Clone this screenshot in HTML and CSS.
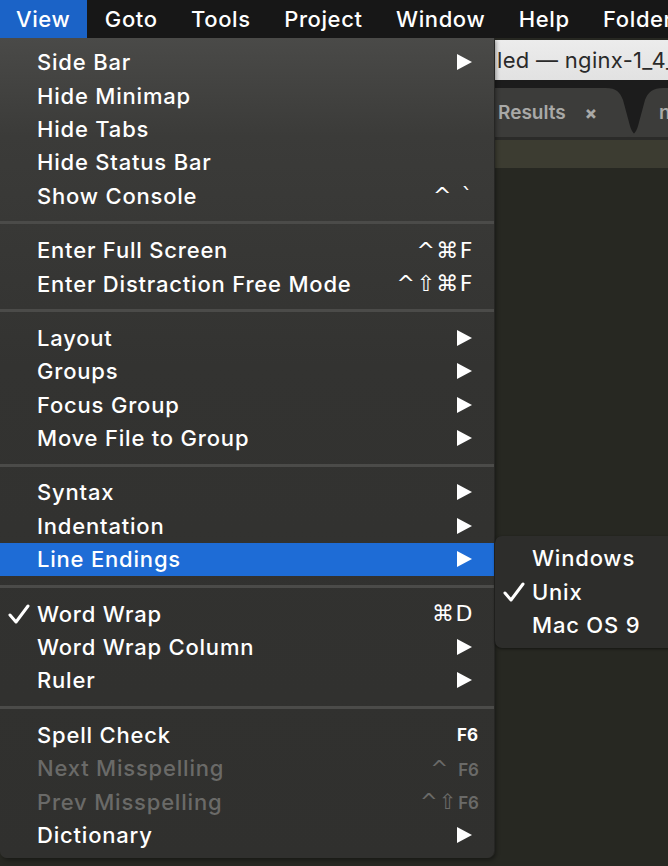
FILE: index.html
```html
<!DOCTYPE html>
<html>
<head>
<meta charset="utf-8">
<link rel="stylesheet" href="styles.css">
</head>
<body>
<div class="screen">
  <div class="menubar">
    <div class="mb-item active">View</div>
    <div class="mb-item">Goto</div>
    <div class="mb-item">Tools</div>
    <div class="mb-item">Project</div>
    <div class="mb-item">Window</div>
    <div class="mb-item">Help</div>
    <div class="mb-item">Folder</div>
  </div>
  <div class="stage">
    <div class="app">
      <div class="titlebar"><span class="title">led — nginx-1_4_5</span></div>
      <div class="tabgap"></div>
      <div class="tabbar">
        <svg class="tabshape" width="668" height="49" viewBox="0 0 668 49">
          <rect x="0" y="0" width="668" height="49" fill="#1c1c1c"/>
          <path d="M0 0 H606 C616 0 620 4 623 12 L630 38 C632 45 636 49 642 49 H0 Z" fill="#3c3c3a"/>
          <path d="M626 49 C632 49 636 45 638 38 L645 12 C648 4 653 0 663 0 H668 V49 Z" fill="#3c3c3a"/>
        </svg>
        <div class="tabs">
          <span class="tab-label">Results</span>
          <span class="tab-close">×</span>
          <span class="tab-label tab2">nginx</span>
        </div>
      </div>
      <div class="tabline"></div>
      <div class="gutterbar"></div>
      <div class="editor"></div>
    </div>

    <div class="menu">
      <div class="item"><span class="check"></span><span class="label">Side Bar</span><svg class="arrow" width="15" height="16" viewBox="0 0 15 16"><path d="M0 0 L15 8 L0 16 Z" fill="#fff"/></svg></div>
      <div class="item"><span class="check"></span><span class="label">Hide Minimap</span></div>
      <div class="item"><span class="check"></span><span class="label">Hide Tabs</span></div>
      <div class="item"><span class="check"></span><span class="label">Hide Status Bar</span></div>
      <div class="item"><span class="check"></span><span class="label">Show Console</span><span class="key">^ `</span></div>
      <div class="sep"></div>
      <div class="item"><span class="check"></span><span class="label">Enter Full Screen</span><span class="key">^⌘F</span></div>
      <div class="item"><span class="check"></span><span class="label">Enter Distraction Free Mode</span><span class="key">^⇧⌘F</span></div>
      <div class="sep"></div>
      <div class="item"><span class="check"></span><span class="label">Layout</span><svg class="arrow" width="15" height="16" viewBox="0 0 15 16"><path d="M0 0 L15 8 L0 16 Z" fill="#fff"/></svg></div>
      <div class="item"><span class="check"></span><span class="label">Groups</span><svg class="arrow" width="15" height="16" viewBox="0 0 15 16"><path d="M0 0 L15 8 L0 16 Z" fill="#fff"/></svg></div>
      <div class="item"><span class="check"></span><span class="label">Focus Group</span><svg class="arrow" width="15" height="16" viewBox="0 0 15 16"><path d="M0 0 L15 8 L0 16 Z" fill="#fff"/></svg></div>
      <div class="item"><span class="check"></span><span class="label">Move File to Group</span><svg class="arrow" width="15" height="16" viewBox="0 0 15 16"><path d="M0 0 L15 8 L0 16 Z" fill="#fff"/></svg></div>
      <div class="sep"></div>
      <div class="item"><span class="check"></span><span class="label">Syntax</span><svg class="arrow" width="15" height="16" viewBox="0 0 15 16"><path d="M0 0 L15 8 L0 16 Z" fill="#fff"/></svg></div>
      <div class="item"><span class="check"></span><span class="label">Indentation</span><svg class="arrow" width="15" height="16" viewBox="0 0 15 16"><path d="M0 0 L15 8 L0 16 Z" fill="#fff"/></svg></div>
      <div class="item selected"><span class="check"></span><span class="label">Line Endings</span><svg class="arrow" width="15" height="16" viewBox="0 0 15 16"><path d="M0 0 L15 8 L0 16 Z" fill="#fff"/></svg></div>
      <div class="sep"></div>
      <div class="item"><span class="check"><svg width="22" height="20" viewBox="0 0 22 20"><path d="M2 11 L8 18 L20 2" fill="none" stroke="#fff" stroke-width="3" stroke-linecap="round" stroke-linejoin="round"/></svg></span><span class="label">Word Wrap</span><span class="key">⌘D</span></div>
      <div class="item"><span class="check"></span><span class="label">Word Wrap Column</span><svg class="arrow" width="15" height="16" viewBox="0 0 15 16"><path d="M0 0 L15 8 L0 16 Z" fill="#fff"/></svg></div>
      <div class="item"><span class="check"></span><span class="label">Ruler</span><svg class="arrow" width="15" height="16" viewBox="0 0 15 16"><path d="M0 0 L15 8 L0 16 Z" fill="#fff"/></svg></div>
      <div class="sep"></div>
      <div class="item"><span class="check"></span><span class="label">Spell Check</span><span class="key fkey">F6</span></div>
      <div class="item disabled"><span class="check"></span><span class="label">Next Misspelling</span><span class="key"><span class="mod">^</span> <span class="fkey">F6</span></span></div>
      <div class="item disabled"><span class="check"></span><span class="label">Prev Misspelling</span><span class="key"><span class="mod">^⇧</span><span class="fkey">F6</span></span></div>
      <div class="item"><span class="check"></span><span class="label">Dictionary</span><svg class="arrow" width="15" height="16" viewBox="0 0 15 16"><path d="M0 0 L15 8 L0 16 Z" fill="#fff"/></svg></div>
    </div>

    <div class="submenu">
      <div class="sub-item"><span class="sub-check"></span><span class="label">Windows</span></div>
      <div class="sub-item"><span class="sub-check"><svg width="22" height="20" viewBox="0 0 22 20"><path d="M2 11 L8 18 L20 2" fill="none" stroke="#fff" stroke-width="3" stroke-linecap="round" stroke-linejoin="round"/></svg></span><span class="label">Unix</span></div>
      <div class="sub-item"><span class="sub-check"></span><span class="label">Mac OS 9</span></div>
    </div>
  </div>
</div>
</body>
</html>
```

FILE: styles.css
```css
* { box-sizing: border-box; }
html, body { margin: 0; padding: 0; }
body {
  width: 668px;
  height: 866px;
  overflow: hidden;
  background: #272822;
  font-family: Inter, "Liberation Sans", "DejaVu Sans", sans-serif;
  color: #fff;
}
.screen { display: flex; flex-direction: column; height: 866px; }

.menubar {
  height: 38px;
  background: #171717;
  display: flex;
  align-items: stretch;
  flex: none;
}
.mb-item {
  display: flex;
  align-items: center;
  padding: 0 16px 0 16px;
  margin-right: 1.5px;
  font-size: 22px;
  font-weight: 500;
  letter-spacing: 0.6px;
  color: #fff;
  white-space: nowrap;
}
.mb-item.active { background: #1b63c7; padding-right: 17px; }

.stage { position: relative; flex: 1; overflow: hidden; }

.app { display: flex; flex-direction: column; height: 100%; }
.titlebar {
  height: 40px;
  margin-top: 2px;
  background: linear-gradient(#ececec, #e2e2e2);
  padding-left: 497px;
  display: flex;
  align-items: center;
  overflow: hidden;
  white-space: nowrap;
}
.title { font-size: 22px; color: #2a2a2a; font-weight: 400; letter-spacing: 0.3px; }
.tabgap { height: 8px; background: #1c1c1c; }
.tabbar { display: grid; height: 49px; }
.tabshape { grid-area: 1 / 1; display: block; }
.tabs {
  grid-area: 1 / 1;
  display: flex;
  align-items: center;
  padding-left: 498px;
  white-space: nowrap;
  overflow: hidden;
}
.tab-label { font-size: 19px; font-weight: 600; color: #a9a9a7; }
.tab-close { font-size: 18px; font-weight: 800; color: #a9a9a7; margin-left: 19px; }
.tab2 { margin-left: 62px; }
.tabline { height: 3px; background: #2b2b29; }
.gutterbar { height: 28px; background: #3c3c31; }
.editor { flex: 1; background: #272822; }

.menu {
  position: absolute;
  left: 0;
  top: 0;
  width: 494px;
  height: 820px;
  padding-top: 7.5px;
  background: linear-gradient(180deg, #4a4a48 0%, #3b3b39 12%, #333331 40%, #30302e 100%);
  border-radius: 0 0 7px 7px;
  box-shadow: 1px 0 0 #262624, 2px 2px 4px rgba(0,0,0,0.4);
}
.item {
  height: 33.4px;
  display: flex;
  align-items: center;
  padding-right: 21px;
  font-size: 22px;
  font-weight: 500;
  letter-spacing: 0.8px;
  color: #fff;
  white-space: nowrap;
}
.check {
  width: 37px;
  flex: none;
  display: flex;
  align-items: center;
  padding-left: 8px;
}
.label { flex: 1; }
.arrow { flex: none; margin-right: 1px; }
.key {
  font-family: "DejaVu Sans", sans-serif;
  font-size: 22px;
  font-weight: 400;
  letter-spacing: 1.5px;
  margin-right: -1px;
}
.fkey {
  font-family: Inter, "Liberation Sans", sans-serif;
  font-size: 17px;
  font-weight: 700;
  letter-spacing: 0;
  margin-right: -5px;
}
.item.disabled { color: #6a6a68; }
.item.disabled .fkey { font-weight: 600; }
.mod { font-family: "DejaVu Sans", sans-serif; font-size: 21px; }
.item.selected { background: #1e6cd6; }
.sep {
  height: 21px;
  display: flex;
  align-items: center;
}
.sep::before {
  content: "";
  display: block;
  width: 100%;
  height: 3px;
  background: #4b4b49;
}

.submenu {
  position: absolute;
  left: 495px;
  top: 498px;
  width: 190px;
  height: 112px;
  padding-top: 5.5px;
  background: #2d2d2b;
  border-radius: 7px;
  box-shadow: 0 1px 3px rgba(0,0,0,0.5);
}
.sub-item {
  height: 33.4px;
  display: flex;
  align-items: center;
  font-size: 22px;
  font-weight: 500;
  letter-spacing: 0.8px;
  white-space: nowrap;
}
.sub-check {
  width: 37px;
  flex: none;
  display: flex;
  align-items: center;
  padding-left: 8px;
}
```
